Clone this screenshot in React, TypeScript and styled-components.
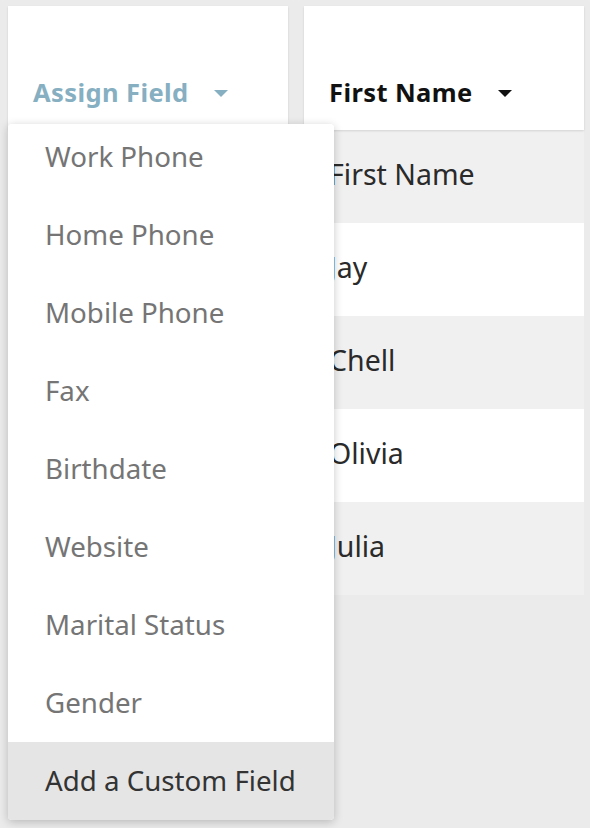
import React from "react";
import styled, { createGlobalStyle } from "styled-components";

const Global = createGlobalStyle`
  html, body { margin: 0; padding: 0; background: #ebebeb; }
  body { font-family: "Noto Sans", "Lato", sans-serif; -webkit-font-smoothing: antialiased; }
`;

const Page = styled.div`
  display: grid;
  grid-template-columns: 280px 280px;
  column-gap: 16px;
  padding: 6px 6px 0 8px;
  width: 590px;
  height: 828px;
  box-sizing: border-box;
  overflow: hidden;
`;

const Column = styled.div`
  position: relative;
  display: flex;
  flex-direction: column;
`;

const Header = styled.div<{ $accent?: boolean }>`
  height: 124px;
  box-sizing: border-box;
  padding: 48px 0 0 25px;
  display: flex;
  align-items: center;
  gap: 25px;
  background: #fff;
  box-shadow: 0 1px 2px rgba(0, 0, 0, 0.12);
  font-size: 25.5px;
  font-weight: 700;
  letter-spacing: 0.4px;
  color: ${(p) => (p.$accent ? "#86afc2" : "#111")};
  position: relative;
  z-index: 1;
`;

const Caret = styled.span<{ $color: string }>`
  width: 0;
  height: 0;
  border-left: 7px solid transparent;
  border-right: 7px solid transparent;
  border-top: 7px solid ${(p) => p.$color};
  margin-top: 2px;
`;

const Row = styled.div<{ $alt: boolean }>`
  height: 93px;
  box-sizing: border-box;
  padding: 0 0 6px 25px;
  display: flex;
  align-items: center;
  background: ${(p) => (p.$alt ? "#f0f0f0" : "#fff")};
  font-size: 28.5px;
  color: #2a2a2a;
`;

const Menu = styled.div`
  position: absolute;
  left: 0;
  top: 118px;
  width: 326px;
  height: 696px;
  background: #fff;
  border-radius: 4px;
  box-shadow: 0 2px 10px rgba(0, 0, 0, 0.22);
  overflow: hidden;
  z-index: 5;
`;

const MenuList = styled.div`
  margin-top: -6px;
  display: flex;
  flex-direction: column;
`;

const Item = styled.div<{ $active?: boolean }>`
  height: 78px;
  box-sizing: border-box;
  padding: 0 0 3px 37px;
  display: flex;
  align-items: center;
  font-size: 27.7px;
  color: ${(p) => (p.$active ? "#333" : "#757575")};
  background: ${(p) => (p.$active ? "#e5e5e5" : "#fff")};
`;

const items = [
  "Work Phone",
  "Home Phone",
  "Mobile Phone",
  "Fax",
  "Birthdate",
  "Website",
  "Marital Status",
  "Gender",
];

const names = ["First Name", "Jay", "Chell", "Olivia", "Julia"];

export default function App() {
  return (
    <>
      <Global />
      <Page>
        <Column>
          <Header $accent>
            <span>Assign Field</span>
            <Caret $color="#86afc2" />
          </Header>
          <Menu>
            <MenuList>
              {items.map((it) => (
                <Item key={it}>{it}</Item>
              ))}
              <Item $active>Add a Custom Field</Item>
            </MenuList>
          </Menu>
        </Column>
        <Column>
          <Header>
            <span>First Name</span>
            <Caret $color="#111" />
          </Header>
          {names.map((n, i) => (
            <Row key={n} $alt={i % 2 === 0}>
              {n}
            </Row>
          ))}
        </Column>
      </Page>
    </>
  );
}
